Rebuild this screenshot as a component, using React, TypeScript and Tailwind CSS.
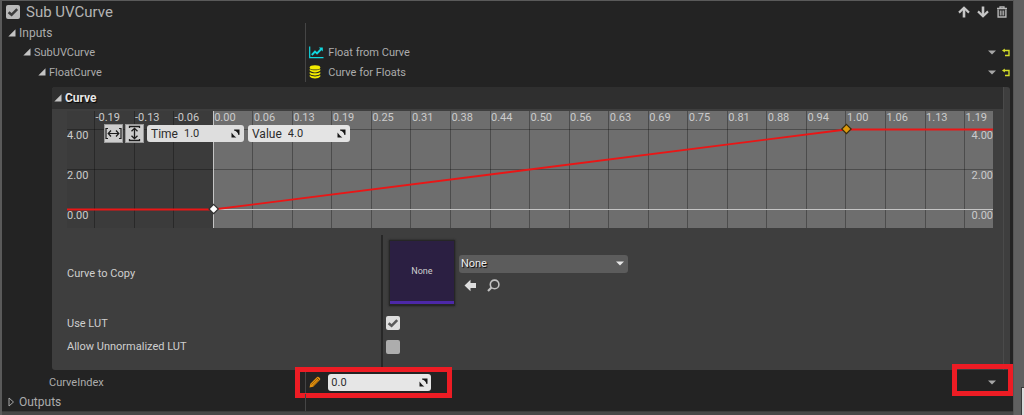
import { useState, type ReactNode } from "react";

const TIMES = [
  "-0.19", "-0.13", "-0.06", "0.00", "0.06", "0.13", "0.19", "0.25", "0.31", "0.38", "0.44", "0.50",
  "0.56", "0.63", "0.69", "0.75", "0.81", "0.88", "0.94", "1.00", "1.06", "1.13", "1.19",
];
const VALUES = [
  { label: "4.00", y: 18 },
  { label: "2.00", y: 58 },
  { label: "0.00", y: 98 },
];
const pct = (n: number) => `${(27.5 + 39.55 * n) / 9.26}%`;
const ZERO = pct(3);
const ONE = pct(19);

function Expander({ open = true, label }: { open?: boolean; label: string }) {
  return (
    <button type="button" aria-label={label} aria-expanded={open} className="flex w-[11px] shrink-0 items-center">
      {open ? (
        <svg width="8" height="8" viewBox="0 0 8 8">
          <path d="M7.5 0.3V7.5H0.3Z" fill="#c4c4c4" />
        </svg>
      ) : (
        <svg width="8" height="10" viewBox="0 0 8 10">
          <path d="M1 1V9L5.5 5Z" fill="none" stroke="#a8a8a8" />
        </svg>
      )}
    </button>
  );
}

function Caret({ color = "#a6a6a6" }: { color?: string }) {
  return (
    <svg width="8" height="5" viewBox="0 0 8 5" className="pointer-events-none shrink-0">
      <path d="M0 0.5H8L4 4.5Z" fill={color} />
    </svg>
  );
}

function Check({ id, checked: initial, label, dim }: { id: string; checked: boolean; label?: string; dim?: boolean }) {
  const [checked, setChecked] = useState(initial);
  return (
    <span className="grid size-[14px] shrink-0">
      <input
        id={id}
        type="checkbox"
        aria-label={label}
        checked={checked}
        onChange={(e) => setChecked(e.target.checked)}
        className={`col-start-1 row-start-1 size-[14px] appearance-none rounded-[2px] ${dim ? "bg-[#b9b9b9]" : "bg-[#adadad] checked:bg-[#dedede]"}`}
      />
      {checked && (
        <svg width="14" height="14" viewBox="0 0 14 14" className="pointer-events-none col-start-1 row-start-1">
          <path d="M2.6 7.2L5.6 9.8L11.2 4.2" fill="none" stroke={dim ? "#3c3c3c" : "#5a5a5a"} strokeWidth="2.6" />
        </svg>
      )}
    </span>
  );
}

function SpinGlyph() {
  return (
    <svg width="9" height="9" viewBox="0 0 9 9" className="shrink-0">
      <path d="M3.2 0.5H8.5V5.8L7.4 6C7 3.8 5.2 2 3 1.6Z" fill="#161616" />
      <path d="M0.5 3.6C1.6 5.2 3.6 7.4 5.4 8.5H0.5Z" fill="#161616" />
    </svg>
  );
}

function NumberBox({ id, label, value, className }: { id: string; label?: string; value: string; className: string }) {
  return (
    <span className={`flex h-[17px] items-center rounded-[3px] text-[#2c2c2c] ${className}`}>
      {label && (
        <label htmlFor={id} className="mr-[6px] text-[12px]">
          {label}
        </label>
      )}
      <input
        id={id}
        aria-label={label ?? "CurveIndex"}
        defaultValue={value}
        className="w-0 min-w-0 flex-1 bg-transparent text-[11px] outline-none"
      />
      <SpinGlyph />
    </span>
  );
}

function Revert() {
  return (
    <button type="button" aria-label="Reset to default" className="shrink-0">
      <svg width="9" height="9" viewBox="0 0 9 9">
        <path d="M2 2.5H7V7.5H3" fill="none" stroke="#d3dc2a" strokeWidth="1.4" />
        <path d="M0 2.5L2.8 0.4V4.6Z" fill="#d3dc2a" />
      </svg>
    </button>
  );
}

function Row({ name, height, indent, children, end }: { name: ReactNode; height: string; indent: string; children?: ReactNode; end?: ReactNode }) {
  return (
    <div className={`flex ${height}`}>
      <div className={`flex w-[30%] shrink-0 items-center ${indent}`}>{name}</div>
      <div className="relative flex flex-1 items-center border-l border-[#454545] pl-[3px]">
        {children}
        <div className="ml-auto flex items-center">{end}</div>
      </div>
    </div>
  );
}

function Key({ x, y, fill, stroke }: { x: string; y: number; fill: string; stroke: string }) {
  return (
    <svg x={x} y={y} overflow="visible">
      <path d="M0.5 -4.7L5.2 0L0.5 4.7L-4.2 0Z" fill={fill} stroke={stroke} strokeWidth="1.2" />
    </svg>
  );
}

function Graph() {
  return (
    <div className="relative">
      <svg width="100%" height="117" className="block text-[11px]">
        <rect width="100%" height="117" fill="#3b3b3b" />
        <rect x={ZERO} width="100%" height="117" fill="#6e6e6e" />
        <g shapeRendering="crispEdges" stroke="#000" strokeOpacity="0.3">
          {TIMES.map((t, i) => (
            <line key={t} x1={pct(i)} x2={pct(i)} y1="0" y2="117" />
          ))}
          {VALUES.map((v) => (
            <line key={v.label} x1="0" x2="100%" y1={v.y + 0.5} y2={v.y + 0.5} />
          ))}
        </g>
        <g shapeRendering="crispEdges" stroke="#c4c4c4">
          <line x1={ZERO} x2={ZERO} y1="0" y2="117" />
          <line x1={ZERO} x2="100%" y1="98.5" y2="98.5" />
        </g>
        <g fill="#cbcbcb">
          {TIMES.map((t, i) => (
            <text key={t} x={pct(i)} dx="1" y="10">{t}</text>
          ))}
          {VALUES.map((v) => (
            <g key={v.label}>
              <text x="0" y={v.y + 10}>{v.label}</text>
              <text x="100%" y={v.y + 10} textAnchor="end">{v.label}</text>
            </g>
          ))}
        </g>
        <g stroke="#ea1616" strokeWidth="1.8">
          <line x1="0" x2={ZERO} y1="98.5" y2="98.5" />
          <line x1={ZERO} x2={ONE} y1="98.5" y2="18.5" />
          <line x1={ONE} x2="100%" y1="18.5" y2="18.5" />
        </g>
        <Key x={ZERO} y={98} fill="#fff" stroke="#333" />
        <Key x={ONE} y={18} fill="#dc9a0c" stroke="#3a2c0c" />
      </svg>
      <div className="absolute top-[13px] left-[37px] flex items-center">
        <button type="button" aria-label="Fit horizontally" className="mr-[2px] grid size-[19px] place-items-center border border-[#9a9a9a] bg-[#cdcdcd]">
          <svg width="17" height="17" viewBox="0 0 17 17" fill="none" stroke="#1c1c1c" strokeWidth="1.2">
            <path d="M3 3.5H1V13.5H3M14 3.5H16V13.5H14M3.5 8.5H13.5M6 5.5L3.2 8.5L6 11.5M11 5.5L13.8 8.5L11 11.5" />
          </svg>
        </button>
        <button type="button" aria-label="Fit vertically" className="mr-[3px] grid size-[19px] place-items-center border border-[#9a9a9a] bg-[#cdcdcd]">
          <svg width="17" height="17" viewBox="0 0 17 17" fill="none" stroke="#1c1c1c" strokeWidth="1.3">
            <path d="M3.5 3V1.5H13.5V3M3.5 14V15.5H13.5V14M8.5 3.5V13.5M5.5 6.3L8.5 3.3L11.5 6.3M5.5 10.7L8.5 13.7L11.5 10.7" />
          </svg>
        </button>
        <NumberBox id="time" label="Time" value="1.0" className="mr-[4px] w-[97px] bg-[#dedede] px-[4px]" />
        <NumberBox id="value" label="Value" value="4.0" className="w-[102px] bg-[#e4e4e4] px-[4px]" />
      </div>
    </div>
  );
}

function CurveBox() {
  return (
    <section className="mt-[5px] mr-[3px] ml-[50px] flex overflow-hidden rounded-[3px] bg-[#3e3e3e]">
      <div className="min-w-0 flex-1">
        <h2 className="flex h-[22px] items-center bg-[#2f2f2f] pl-[2px] text-[12px] font-bold text-[#e6e6e6] [text-shadow:1px_1px_1px_#000]">
          <Expander label="Curve" />
          Curve
        </h2>
        <div className="pt-[2px] pr-[10px] pl-[15px]">
          <Graph />
        </div>
        <div className="mt-[7px] grid grid-cols-[11fr_21fr] text-[11px] text-[#cfcfcf]">
          <div className="pb-[12px] pl-[15px]">
            <label htmlFor="curve" className="flex h-[76px] items-center">Curve to Copy</label>
            <label htmlFor="lut" className="flex h-[24px] items-center">Use LUT</label>
            <label htmlFor="unnorm" className="flex h-[23px] items-center">Allow Unnormalized LUT</label>
          </div>
          <div className="ml-[2px] border-l-2 border-[#272727] pb-[12px] pl-[3px]">
            <div className="flex h-[76px] items-center">
              <div className="mr-[4px] ml-[3px] grid size-[66px] place-items-center border border-b-2 border-[#262626] bg-[#2b1f42] shadow-[0_0_2px_#1c1c1c]">
                <div className="grid size-full place-items-center border-b-[3px] border-[#4c28a8] text-[9px]">None</div>
              </div>
              <div className="flex flex-col gap-[6px]">
                <div className="grid h-[18px] w-[169px] items-center rounded-[3px] bg-[#5c5c5c]">
                  <select id="curve" className="col-start-1 row-start-1 h-full w-full appearance-none bg-transparent pl-[2px] text-[11px] text-[#ececec] [text-shadow:1px_1px_1px_#000]">
                    <option>None</option>
                  </select>
                  <span className="pointer-events-none col-start-1 row-start-1 mr-[4px] justify-self-end">
                    <Caret color="#e8e8e8" />
                  </span>
                </div>
                <div className="flex items-center gap-[10px] pl-[5px]">
                  <button type="button" aria-label="Use selected asset">
                    <svg width="13" height="13" viewBox="0 0 13 13">
                      <path d="M0.5 6.5L6.5 0.8V4H12V9H6.5V12.2Z" fill="#dedede" />
                    </svg>
                  </button>
                  <button type="button" aria-label="Browse to asset">
                    <svg width="13" height="13" viewBox="0 0 13 13" fill="none" stroke="#c2c2c2">
                      <circle cx="7.6" cy="5.4" r="4.3" strokeWidth="1.6" />
                      <path d="M4.5 8.5L1 12" strokeWidth="2.2" />
                    </svg>
                  </button>
                </div>
              </div>
            </div>
            <div className="flex h-[24px] items-center">
              <Check id="lut" checked />
            </div>
            <div className="flex h-[23px] items-center">
              <Check id="unnorm" checked={false} />
            </div>
          </div>
        </div>
      </div>
      <div className="w-[7px] shrink-0 border-l border-[#4a4a4a]" />
    </section>
  );
}

export default function App() {
  return (
    <div className="flex min-h-screen bg-[#464646] font-[Roboto,sans-serif] text-[11px] leading-none text-[#acacac]">
      <main className="min-w-0 flex-1 border-l-2 border-[#5a5a5a]">
        <div className="border-t border-b border-t-[#5a5a5a] border-b-[#3a3a3a] bg-[#232323]">
          <header className="flex h-[22px] items-center pr-[5px] pl-[4px]">
            <Check id="enabled" checked label="Enable Sub UVCurve" dim />
            <h1 className="ml-[6px] text-[15px] text-[#b4b4b4]">Sub UVCurve</h1>
            <div className="ml-auto flex items-center gap-[7px]">
              <button type="button" aria-label="Move up">
                <svg width="12" height="12" viewBox="0 0 12 12" fill="none" stroke="#c6c6c6">
                  <path d="M6 11.5V2" strokeWidth="2.6" />
                  <path d="M1 6.6L6 1.8L11 6.6" strokeWidth="2.2" />
                </svg>
              </button>
              <button type="button" aria-label="Move down">
                <svg width="12" height="12" viewBox="0 0 12 12" fill="none" stroke="#c6c6c6">
                  <path d="M6 0.5V10" strokeWidth="2.6" />
                  <path d="M1 5.4L6 10.2L11 5.4" strokeWidth="2.2" />
                </svg>
              </button>
              <button type="button" aria-label="Delete">
                <svg width="12" height="12" viewBox="0 0 12 12" fill="none" stroke="#b8b8b8">
                  <path d="M1 2.5H11M4 2V0.8H8V2" strokeWidth="1.3" />
                  <path d="M2.1 3.5V11H9.9V3.5" strokeWidth="1.4" />
                  <path d="M4.3 4.5V9.5M6 4.5V9.5M7.7 4.5V9.5" strokeWidth="1" />
                </svg>
              </button>
            </div>
          </header>

          <Row
            height="h-[19px]"
            indent="pl-[6px] text-[12px]"
            name={<><Expander label="Inputs" />Inputs</>}
          />
          <Row
            height="h-[20px]"
            indent="pl-[21px]"
            name={<><Expander label="SubUVCurve" />SubUVCurve</>}
            end={<div className="flex items-center gap-[6px] pr-[2px]"><button type="button" aria-label="SubUVCurve options"><Caret /></button><Revert /></div>}
          >
            <svg width="15" height="13" viewBox="0 0 15 13" fill="none" stroke="#10d8e0" className="mr-[4px]">
              <path d="M0.7 0.5V11.6H14.5" strokeWidth="1.2" />
              <path d="M2.8 9L6 5.6L8 7.4L12.3 3" strokeWidth="1.9" />
              <path d="M9.8 1.5H13.8V5.5Z" fill="#10d8e0" stroke="none" />
            </svg>
            Float from Curve
          </Row>
          <Row
            height="h-[20px]"
            indent="pl-[36px]"
            name={<><Expander label="FloatCurve" />FloatCurve</>}
            end={<div className="flex items-center gap-[6px] pr-[2px]"><button type="button" aria-label="FloatCurve options"><Caret /></button><Revert /></div>}
          >
            <svg width="12" height="14" viewBox="0 0 12 14" fill="#f2ec00" className="mr-[7px]">
              <ellipse cx="6" cy="2.4" rx="5.3" ry="2.2" />
              <path d="M0.7 3.9C2.5 5.6 9.5 5.6 11.3 3.9V5.6C9.5 8 2.5 8 0.7 5.6Z" />
              <path d="M0.7 7C2.5 8.7 9.5 8.7 11.3 7V8.7C9.5 11 2.5 11 0.7 8.7Z" />
              <path d="M0.7 10.1C2.5 11.8 9.5 11.8 11.3 10.1V11.6C9.5 14.2 2.5 14.2 0.7 11.6Z" />
            </svg>
            Curve for Floats
          </Row>

          <CurveBox />

          <Row
            height="h-[24px]"
            indent="pl-[47px]"
            name={<label htmlFor="index">CurveIndex</label>}
            end={
              <>
                <button type="button" aria-label="CurveIndex options" className="mr-[17px]"><Caret /></button>
                <span className="pointer-events-none absolute -top-[6px] right-0 h-[32px] w-[61px] border-[5px] border-[#ed1c24]" />
              </>
            }
          >
            <svg width="12" height="12" viewBox="0 0 12 12" className="mr-[7px]">
              <path d="M0.5 11.5L1.3 7.7L8 1.1Q9 0.2 10.2 1.4L10.8 2Q11.8 3 10.9 4L4.2 10.7Z" fill="#e0900f" />
              <path d="M2.4 8.6L8.2 2.9M3.8 9.8L9.6 4.1" stroke="#8a5205" strokeWidth="0.7" />
              <path d="M7.6 1.6L10.4 4.4" stroke="#5b3a08" strokeWidth="0.8" />
            </svg>
            <NumberBox id="index" value="0.0" className="w-[103px] bg-[#e6e6e6] px-[3px]" />
            <span className="pointer-events-none absolute -top-[3px] -left-[11px] h-[31px] w-[157px] border-[5px] border-[#ed1c24]" />
          </Row>
          <Row
            height="h-[17px]"
            indent="pb-[2px] pl-[6px] text-[12px]"
            name={<><Expander open={false} label="Outputs" />Outputs</>}
          />
        </div>
      </main>
      <aside className="flex w-[11px] shrink-0 flex-col items-end justify-end border-l border-[#555] bg-[#606060]">
        <div className="h-[28px] w-[3px] border-t border-l border-[#3a3a3a] bg-[#dcdcdc]" />
      </aside>
    </div>
  );
}
